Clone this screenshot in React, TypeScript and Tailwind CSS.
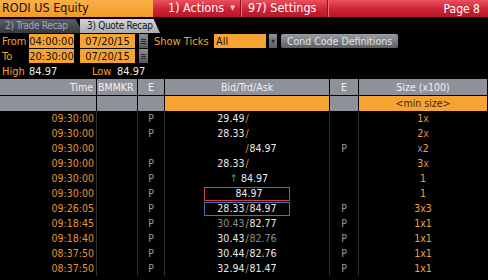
import React from "react";

type Quote = { bid?: string; ask?: string; bidDim?: boolean; askDim?: boolean };
type Row = {
  time: string;
  e1?: string;
  e2?: string;
  quote?: Quote;
  trade?: string;
  up?: boolean;
  box?: "red" | "blue";
  size: React.ReactNode;
};

const X = ({ dim }: { dim?: boolean }) => (
  <span className={dim ? "text-[#8a94a6]" : "text-[#d08f3a]"}>x</span>
);

const rows: Row[] = [
  { time: "09:30:00", e1: "P", quote: { bid: "29.49" }, size: <>1<X /></> },
  { time: "09:30:00", e1: "P", quote: { bid: "28.33" }, size: <>2<X /></> },
  { time: "09:30:00", e2: "P", quote: { ask: "84.97" }, size: <><X dim />2</> },
  { time: "09:30:00", e1: "P", quote: { bid: "28.33" }, size: <>3<X /></> },
  { time: "09:30:00", e1: "P", trade: "84.97", up: true, size: "1" },
  { time: "09:30:00", e1: "P", trade: "84.97", box: "red", size: "1" },
  { time: "09:26:05", e1: "P", e2: "P", quote: { bid: "28.33", ask: "84.97" }, box: "blue", size: "3x3" },
  { time: "09:18:45", e1: "P", e2: "P", quote: { bid: "30.43", ask: "82.77", bidDim: true }, size: "1x1" },
  { time: "09:18:40", e1: "P", e2: "P", quote: { bid: "30.43", ask: "82.76", askDim: true }, size: "1x1" },
  { time: "08:37:50", e1: "P", e2: "P", quote: { bid: "30.44", ask: "82.76" }, size: "1x1" },
  { time: "08:37:50", e1: "P", e2: "P", quote: { bid: "32.94", ask: "81.47" }, size: "1x1" },
];

function Bta({ r }: { r: Row }) {
  const box =
    r.box === "red"
      ? "border border-[#d0404a]"
      : r.box === "blue"
      ? "border border-[#4d6fae]"
      : "border border-transparent";
  return (
    <div className="flex h-full items-center pl-[39px]">
      <div className={`flex h-[14px] w-[86px] items-center justify-center ${box}`}>
        {r.quote ? (
          <div className="grid w-full grid-cols-[1fr_auto_1fr] items-center">
            <span className={`text-right ${r.quote.bidDim ? "text-[#8c8c8c]" : "text-[#ececec]"}`}>
              {r.quote.bid ?? ""}
            </span>
            <span className="px-px text-[#e0962c]">/</span>
            <span className={`text-left ${r.quote.askDim ? "text-[#8c8c8c]" : "text-[#ececec]"}`}>
              {r.quote.ask ?? ""}
            </span>
          </div>
        ) : (
          <span className="pl-[4px] text-[#ececec]">
            {r.up && <span className="mr-[3px] text-[#2fae4a]">↑</span>}
            {r.trade}
          </span>
        )}
      </div>
    </div>
  );
}

function CalBtn() {
  return (
    <span className="ml-[4px] flex h-[14px] w-[9px] flex-col items-center justify-center gap-px bg-linear-to-b from-[#8e9096] to-[#55575c]">
      <span className="h-px w-[5px] bg-[#2a2b2e]" />
      <span className="h-px w-[5px] bg-[#2a2b2e]" />
      <span className="h-px w-[5px] bg-[#2a2b2e]" />
    </span>
  );
}

export default function App() {
  return (
    <div className="h-[280px] w-[488px] overflow-hidden whitespace-nowrap bg-black [font-family:'DejaVu_Sans_Condensed','Liberation_Sans',sans-serif]">
      {/* title bar */}
      <div className="flex h-[17px]">
        <div className="flex w-[153px] items-center bg-linear-to-b from-[#fbb046] to-[#f39a24] pl-[2px] text-[12.5px] leading-none text-[#141414]">
          RODI US Equity
        </div>
        <div className="flex flex-1 items-center bg-linear-to-b from-[#e9505d] via-[#cf2638] to-[#b5162a] text-[12.5px] leading-none text-white">
          <span className="ml-[15px] flex w-[72px] items-center">
            1) Actions <span className="ml-[6px] text-[7px] text-[#f2c4c8]">▼</span>
          </span>
          <span className="h-full w-px bg-[#8e1020]" />
          <span className="h-full w-px bg-[#ee6a76]" />
          <span className="ml-[6px] w-[79px]">97) Settings</span>
          <span className="h-full w-px bg-[#8e1020]" />
          <span className="h-full w-px bg-[#ee6a76]" />
          <span className="ml-auto mr-[8px] text-[12px]">Page 8</span>
        </div>
      </div>

      {/* tabs */}
      <div className="flex h-[16px] items-end">
        <div className="flex h-[14px] w-[83px] items-center bg-linear-to-b from-[#5a5d66] to-[#383a40] pl-[5px] text-[10px] leading-none tracking-[-0.3px] text-[#a6a8b0] [clip-path:polygon(0_0,91%_0,100%_100%,0_100%)]">
          2) Trade Recap
        </div>
        <div className="-ml-[3px] flex h-[14px] w-[80px] items-center bg-linear-to-b from-[#d6d7da] to-[#a9abb0] pl-[7px] text-[10px] leading-none tracking-[-0.3px] text-[#151515] [clip-path:polygon(0_0,92%_0,100%_100%,0_100%)]">
          3) Quote Recap
        </div>
      </div>

      {/* controls */}
      <div className="flex h-[15px] items-center pt-px text-[11px] leading-none">
        <span className="w-[29px] pl-[2px] text-[#f3a232]">From</span>
        <span className="flex h-[14px] w-[45px] items-center justify-center bg-[#f7a334] text-[#111]">04:00:00</span>
        <span className="ml-[6px] flex h-[14px] w-[55px] items-center justify-center bg-[#f7a334] text-[#111]">07/20/15</span>
        <CalBtn />
        <span className="ml-[6px] w-[60px] text-[#f3a232]">Show Ticks</span>
        <span className="flex h-[14px] w-[52px] items-center bg-[#f7a334] pl-[2px] text-[#111]">All</span>
        <span className="ml-[3px] flex h-[14px] w-[8px] items-center justify-center bg-linear-to-b from-[#8e9096] to-[#5c5e63] text-[5px] text-[#222]">▼</span>
        <span className="ml-[4px] flex h-[14px] w-[117px] items-center justify-center rounded-[2px] bg-linear-to-b from-[#9a9ca2] to-[#5d5f64] text-[10.5px] text-[#e4e4e4]">
          Cond Code Definitions
        </span>
      </div>
      <div className="flex h-[15px] items-center pt-px text-[11px] leading-none">
        <span className="w-[29px] pl-[2px] text-[#f3a232]">To</span>
        <span className="flex h-[14px] w-[45px] items-center justify-center bg-[#f7a334] text-[#111]">20:30:00</span>
        <span className="ml-[6px] flex h-[14px] w-[55px] items-center justify-center bg-[#f7a334] text-[#111]">07/20/15</span>
        <CalBtn />
      </div>
      <div className="flex h-[16px] items-center text-[11px] leading-none">
        <span className="w-[29px] pl-[2px] text-[#f3a232]">High</span>
        <span className="w-[63px] text-[#ececec]">84.97</span>
        <span className="w-[25px] text-[#f3a232]">Low</span>
        <span className="text-[#ececec]">84.97</span>
      </div>

      {/* header */}
      <div className="flex h-[16px] gap-px text-[10.5px] leading-none text-[#f0f0f2]">
        <div className="flex w-[96px] items-center justify-end bg-[#8f9199] pr-[3px]">Time</div>
        <div className="flex w-[40px] items-center bg-[#8f9199] pl-px">BMMKR</div>
        <div className="flex w-[26px] items-center justify-center bg-[#8f9199]">E</div>
        <div className="flex w-[164px] items-center justify-center bg-[#8f9199]">Bid/Trd/Ask</div>
        <div className="flex w-[28px] items-center justify-center bg-[#8f9199]">E</div>
        <div className="flex w-[128px] items-center justify-center bg-[#8f9199]">Size (x100)</div>
      </div>
      <div className="mt-px flex h-[15px] gap-px text-[10.5px] leading-none text-[#3a2a10]">
        <div className="w-[96px] bg-[#8f9199]" />
        <div className="w-[40px] bg-[#8f9199]" />
        <div className="w-[26px] bg-[#8f9199]" />
        <div className="w-[164px] bg-[#f7a334]" />
        <div className="w-[28px] bg-[#8f9199]" />
        <div className="flex w-[128px] items-center justify-center bg-[#f7a334]">&lt;min size&gt;</div>
      </div>

      {/* data */}
      <div className="flex w-[487px] flex-col bg-[#2e2f33]">
        {rows.map((r, i) => (
          <div key={i} className="flex h-[15px] gap-px text-[10.5px] leading-none">
            <div className="flex w-[96px] items-center justify-end bg-black pr-[2px] text-[#e5972b]">
              {r.time}
            </div>
            <div className="w-[40px] bg-black" />
            <div className="flex w-[26px] items-center justify-center bg-black text-[#9b9b9b]">{r.e1}</div>
            <div className="w-[164px] bg-black">
              <Bta r={r} />
            </div>
            <div className="flex w-[28px] items-center justify-center bg-black text-[#9b9b9b]">{r.e2}</div>
            <div className="flex w-[128px] items-center justify-center bg-black text-[#f0a232]">{r.size}</div>
          </div>
        ))}
      </div>
    </div>
  );
}
